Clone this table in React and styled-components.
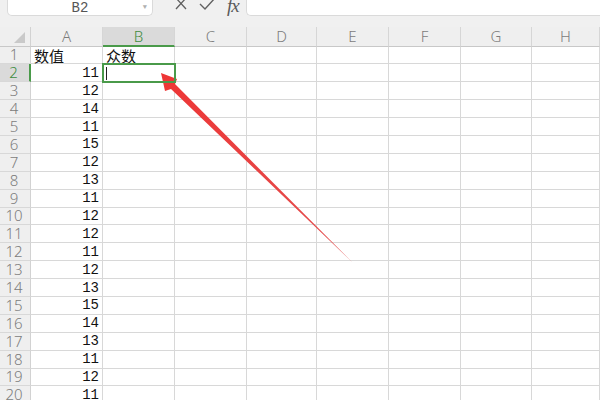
import React from "react";
import styled, { createGlobalStyle } from "styled-components";

const GlobalStyle = createGlobalStyle`
  html, body {
    margin: 0;
    padding: 0;
    background: #ffffff;
    overflow: hidden;
  }
`;

const Page = styled.div`
  position: relative;
  width: 600px;
  height: 400px;
  overflow: hidden;
  background: #ffffff;
  font-family: "Noto Sans", "Liberation Sans", sans-serif;
`;

const Toolbar = styled.div`
  display: flex;
  align-items: flex-start;
  height: 27px;
  background: #f0f0f0;
`;

const NameBox = styled.div`
  position: relative;
  box-sizing: border-box;
  margin-left: 7px;
  width: 146px;
  height: 16px;
  background: #ffffff;
  border: 1px solid #dadada;
  border-top: none;
  border-radius: 0 0 5px 5px;
  display: flex;
  align-items: center;
  justify-content: center;
  font-family: "Liberation Mono", monospace;
  font-size: 14px;
  color: #555;
  line-height: 14px;
`;

const Caret = styled.span`
  position: absolute;
  right: 5px;
  top: 3px;
  font-size: 7px;
  line-height: 8px;
  color: #b0b0b0;
`;

const IconGroup = styled.div`
  display: flex;
  align-items: flex-start;
  gap: 11px;
  margin-left: 21px;
  margin-top: -3px;
  color: #606060;
`;

const FxLabel = styled.span`
  font-family: "Liberation Serif", serif;
  font-style: italic;
  font-size: 19px;
  line-height: 18px;
  color: #5a5a5a;
  letter-spacing: -1px;
`;

const FormulaInput = styled.div`
  flex: 1;
  box-sizing: border-box;
  margin-left: 7px;
  height: 16px;
  background: #ffffff;
  border: 1px solid #dadada;
  border-top: none;
  border-right: none;
  border-radius: 0 0 0 5px;
`;

const Grid = styled.div`
  display: grid;
  grid-template-columns: 31px 72px 72px 72px 70px 72px 72px 71px 68px;
  grid-template-rows: 19.5px repeat(20, 17.9px);
`;

const Corner = styled.div`
  position: relative;
  box-sizing: border-box;
  background: #efefef;
  border-right: 1px solid #d2d2d2;
  border-bottom: 1px solid #c8c8c8;
  &::after {
    content: "";
    position: absolute;
    right: 5px;
    bottom: 3px;
    width: 0;
    height: 0;
    border-left: 11px solid transparent;
    border-bottom: 11px solid #c9c9c9;
  }
`;

const ColHead = styled.div`
  box-sizing: border-box;
  display: flex;
  align-items: center;
  justify-content: center;
  background: ${(p) => (p.$active ? "#dadada" : "#efefef")};
  color: ${(p) => (p.$active ? "#3d8c3d" : "#7c7c7c")};
  border-right: 1px solid #d6d6d6;
  border-bottom: ${(p) => (p.$active ? "2px solid #4a9a4a" : "1px solid #c8c8c8")};
  font-size: 15px;
  line-height: 15px;
  font-weight: 300;
  padding-top: ${(p) => (p.$active ? "1px" : "0")};
`;

const RowHead = styled.div`
  box-sizing: border-box;
  display: flex;
  align-items: center;
  justify-content: center;
  background: ${(p) => (p.$active ? "#dadada" : "#efefef")};
  color: ${(p) => (p.$active ? "#3d8c3d" : "#7c7c7c")};
  border-right: ${(p) => (p.$active ? "2px solid #4a9a4a" : "1px solid #d2d2d2")};
  border-bottom: 1px solid #d8d8d8;
  font-size: 15px;
  line-height: 15px;
  font-weight: 300;
  padding-right: 2px;
`;

const Cell = styled.div`
  position: relative;
  box-sizing: border-box;
  display: flex;
  align-items: center;
  justify-content: ${(p) => (p.$num ? "flex-end" : "flex-start")};
  padding: 1px 3px 0 3px;
  border-right: 1px solid #d8d8d8;
  border-bottom: 1px solid #d8d8d8;
  font-family: ${(p) =>
    p.$num
      ? '"Liberation Mono", monospace'
      : '"Noto Sans CJK SC", "Noto Sans", sans-serif'};
  font-size: ${(p) => (p.$num ? "14px" : "15px")};
  line-height: 15px;
  color: #111;
  white-space: nowrap;
  ${(p) =>
    p.$selected &&
    `
    outline: 2px solid #4a9a4a;
    outline-offset: -1px;
    z-index: 1;
  `}
`;

const EditCaret = styled.span`
  width: 1px;
  height: 13px;
  background: #222;
`;

const ArrowLayer = styled.svg`
  position: absolute;
  left: 0;
  top: 0;
  pointer-events: none;
`;

const columns = ["A", "B", "C", "D", "E", "F", "G", "H"];
const values = [11, 12, 14, 11, 15, 12, 13, 11, 12, 12, 11, 12, 13, 15, 14, 13, 11, 12, 11];

function App() {
  const rows = [];
  for (let r = 1; r <= 20; r++) {
    rows.push(
      <RowHead key={`rh${r}`} $active={r === 2}>
        {r}
      </RowHead>
    );
    columns.forEach((c, ci) => {
      let content = null;
      let num = false;
      if (r === 1 && ci === 0) content = "数值";
      else if (r === 1 && ci === 1) content = "众数";
      else if (r > 1 && ci === 0) {
        content = values[r - 2];
        num = true;
      } else if (r === 2 && ci === 1) content = <EditCaret />;
      rows.push(
        <Cell key={`c${r}-${ci}`} $num={num} $selected={r === 2 && ci === 1}>
          {content}
        </Cell>
      );
    });
  }

  return (
    <Page>
      <GlobalStyle />
      <Toolbar>
        <NameBox>
          B2
          <Caret>▼</Caret>
        </NameBox>
        <IconGroup>
          <svg width="14" height="14" viewBox="0 0 14 14">
            <path d="M2 1 L12 12 M12 1 L2 12" stroke="#606060" strokeWidth="1.3" fill="none" />
          </svg>
          <svg width="17" height="14" viewBox="0 0 17 14">
            <path d="M1 7 L6 12 L16 1" stroke="#606060" strokeWidth="1.4" fill="none" />
          </svg>
          <FxLabel>fx</FxLabel>
        </IconGroup>
        <FormulaInput />
      </Toolbar>
      <Grid>
        <Corner />
        {columns.map((c) => (
          <ColHead key={`h${c}`} $active={c === "B"}>
            {c}
          </ColHead>
        ))}
        {rows}
      </Grid>
      <ArrowLayer width="600" height="400" viewBox="0 0 600 400">
        <defs>
          <linearGradient id="arrowFill" x1="0" y1="0" x2="1" y2="1">
            <stop offset="0" stopColor="#ee3535" />
            <stop offset="1" stopColor="#e25050" />
          </linearGradient>
        </defs>
        <polygon
          points="161,73 177,79 175,84 352,262 171,89 165,91"
          fill="url(#arrowFill)"
        />
      </ArrowLayer>
    </Page>
  );
}

export default App;
